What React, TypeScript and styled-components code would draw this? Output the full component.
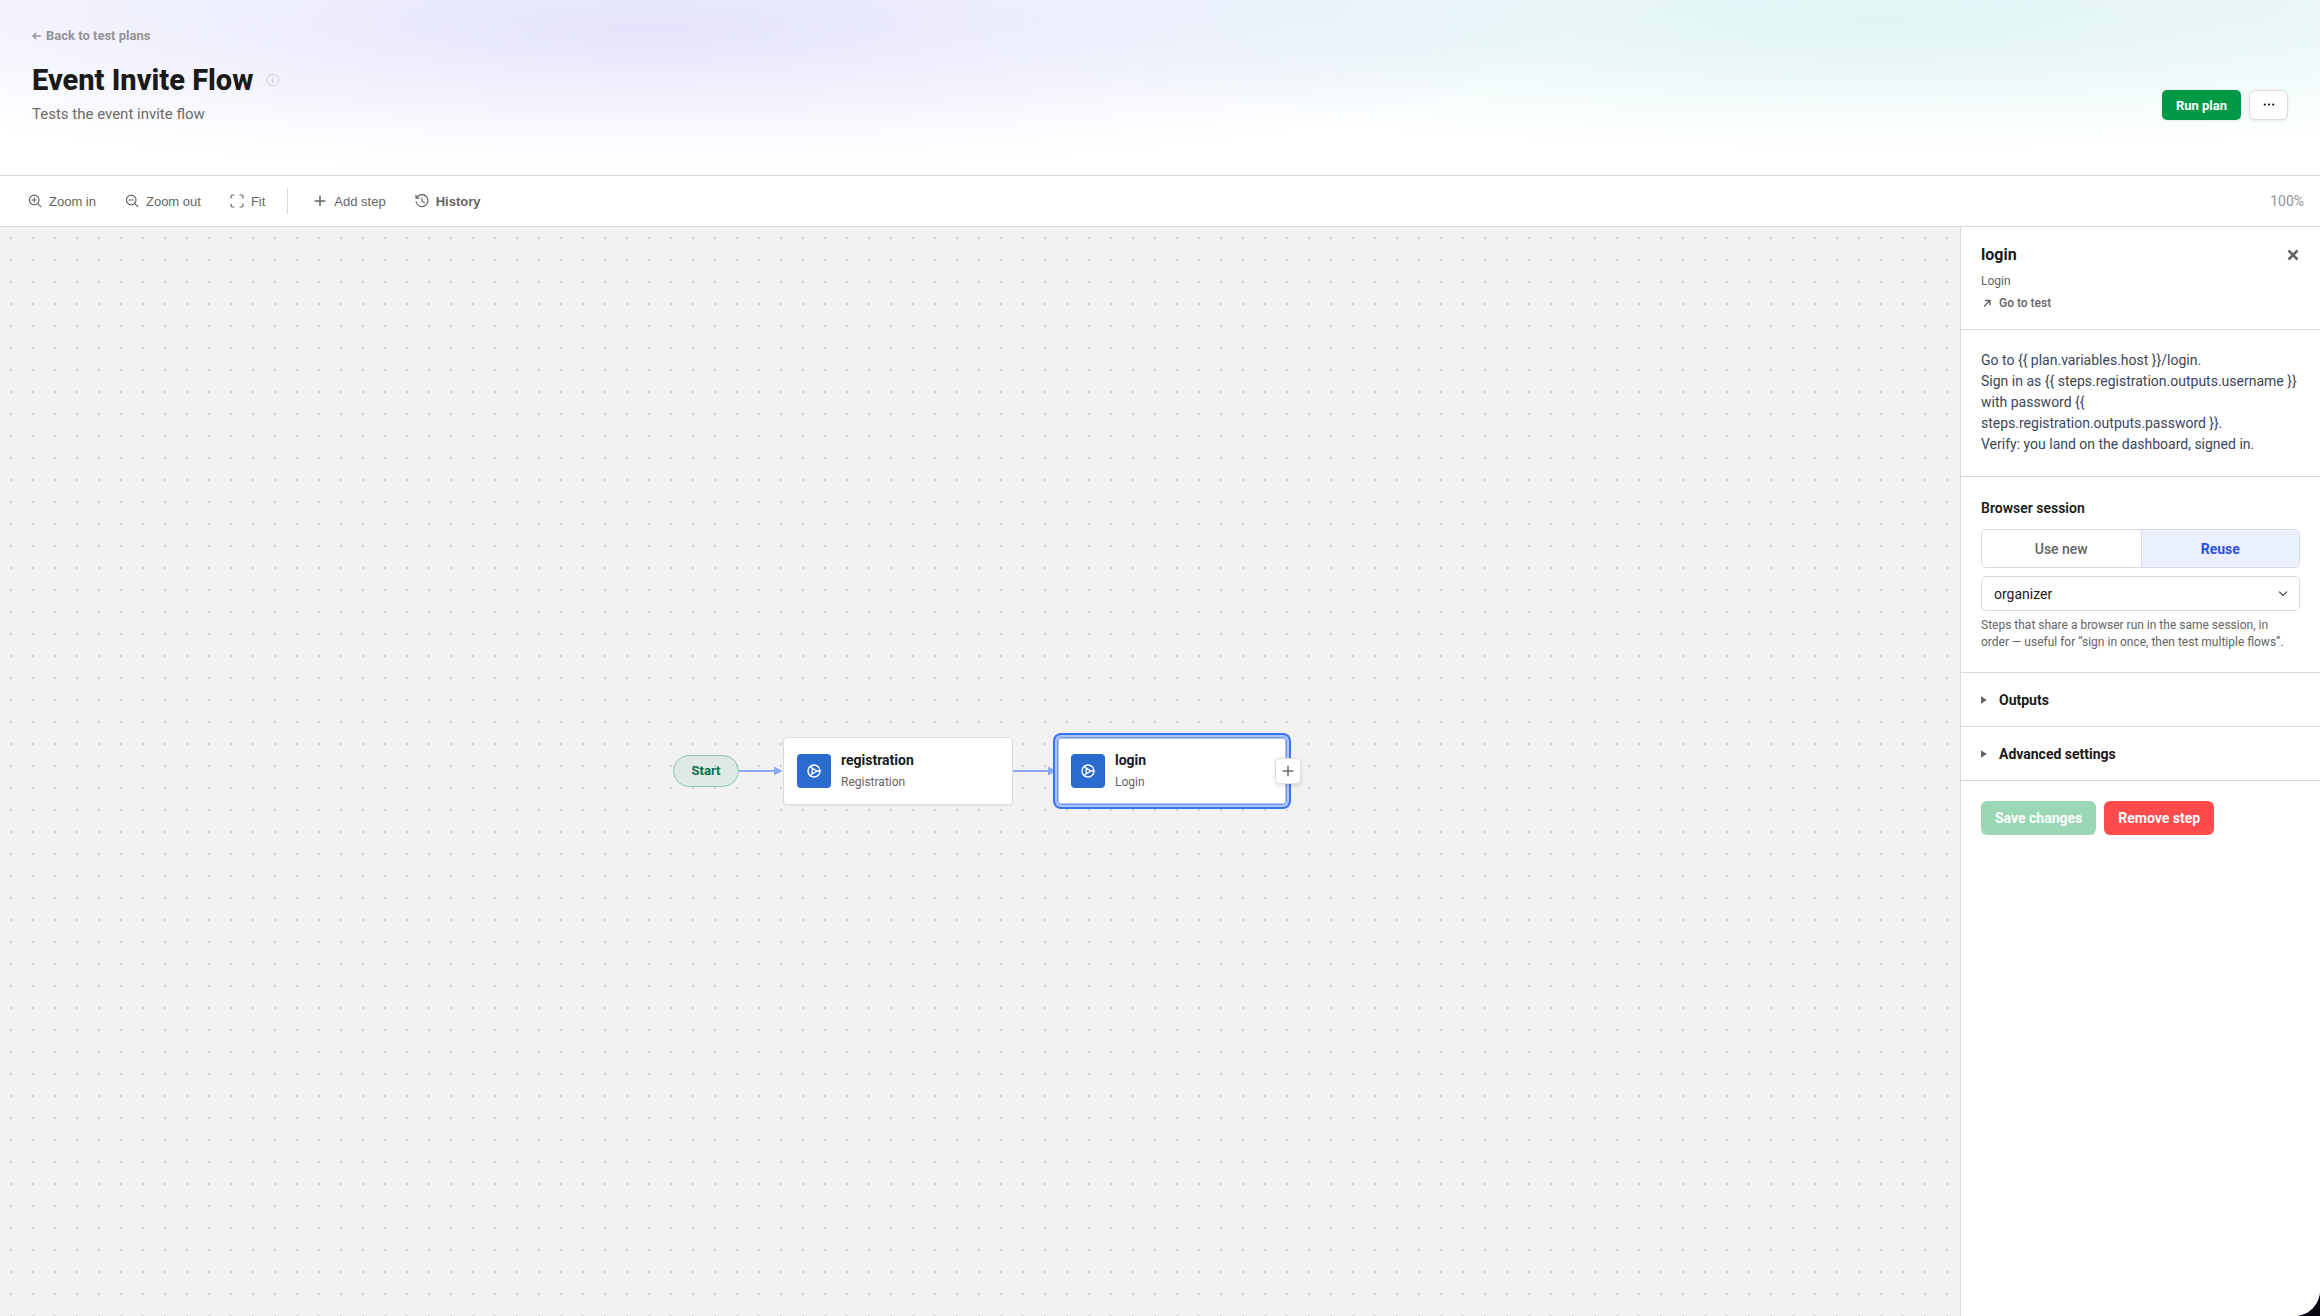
import React, { useState } from "react";
import styled, { createGlobalStyle } from "styled-components";

const GlobalStyle = createGlobalStyle`
  *, *::before, *::after { box-sizing: border-box; }
  body {
    margin: 0;
    background: #05060f;
    color: #1a1a1a;
    font-family: Roboto, "Noto Sans", "Liberation Sans", sans-serif;
    font-size: 14px;
    -webkit-font-smoothing: antialiased;
  }
  h1, h2, h3, p { margin: 0; }
  button, select { font: inherit; cursor: pointer; }
  a { color: inherit; text-decoration: none; }
`;

const Page = styled.div`
  min-height: 100vh;
  display: flex;
  flex-direction: column;
  background: #fff;
  border-bottom-right-radius: 26px;
  overflow: hidden;
`;

const Header = styled.header`
  display: flex;
  align-items: flex-end;
  justify-content: space-between;
  padding: 26px 32px 50px;
  border-bottom: 1px solid #d9dadb;
  background:
    radial-gradient(ellipse 40% 82% at 28% 17%, rgba(124, 108, 232, 0.17), rgba(124, 108, 232, 0.08) 50%, rgba(124, 108, 232, 0) 100%),
    radial-gradient(ellipse 40% 75% at 81% 13%, rgba(60, 205, 175, 0.14), rgba(60, 205, 175, 0.07) 50%, rgba(60, 205, 175, 0) 100%),
    linear-gradient(180deg, #f8faff 0, #fff 75%);
`;

const BackLink = styled.a`
  display: flex;
  align-items: center;
  gap: 5px;
  color: #949494;
  font-size: 13px;
  line-height: 19px;
  font-weight: 700;
`;

const TitleRow = styled.div`
  display: flex;
  align-items: center;
  gap: 13px;
  margin-top: 16px;
`;

const Title = styled.h1`
  font-size: 29px;
  line-height: 38px;
  font-weight: 800;
`;

const Subtitle = styled.p`
  margin-top: 4px;
  color: #6b6b6b;
  font-size: 15px;
  line-height: 22px;
`;

const HeaderActions = styled.div`
  display: flex;
  gap: 8px;
  padding-bottom: 5px;
`;

const RunButton = styled.button`
  height: 30px;
  padding: 0 14px;
  border: 0;
  border-radius: 5px;
  background: #009a47;
  color: #fff;
  font-size: 13px;
  font-weight: 700;
  box-shadow: 0 1px 2px rgba(0, 0, 0, 0.08);
`;

const MoreButton = styled.button`
  display: grid;
  place-items: center;
  width: 39px;
  height: 30px;
  padding: 0;
  border: 1px solid #dcdcdc;
  border-radius: 6px;
  background: #fff;
  color: #1a1a1a;
  box-shadow: 0 1px 2px rgba(0, 0, 0, 0.08);
`;

const Toolbar = styled.div`
  display: flex;
  align-items: center;
  gap: 5px;
  height: 51px;
  padding: 0 16px;
  border-bottom: 1px solid #d9dadb;
`;

const ToolButton = styled.button<{ $strong?: boolean }>`
  display: flex;
  align-items: center;
  gap: 7px;
  height: 28px;
  padding: 0 12px;
  border: 0;
  background: none;
  color: #646464;
  font-family: "Liberation Sans", Arial, sans-serif;
  font-size: 13px;
  font-weight: ${(p) => (p.$strong ? 700 : 400)};
`;

const Divider = styled.span`
  width: 1px;
  height: 26px;
  margin: 0 8px 0 5px;
  background: #d9dadb;
`;

const ZoomLevel = styled.span`
  margin-left: auto;
  color: #949494;
  font-size: 14px;
`;

const Workspace = styled.main`
  flex: 1;
  display: flex;
`;

const Canvas = styled.section`
  flex: 1;
  display: flex;
  align-items: center;
  justify-content: center;
  padding-bottom: 2px;
  background: radial-gradient(circle, #d2d2d2 1px, transparent 1px) 0 0 / 22px 22px #f2f2f2;
`;

const StartNode = styled.div`
  display: flex;
  justify-content: center;
  width: 66px;
  border: 1px solid #8dcab4;
  border-radius: 16px;
  background: rgba(0, 122, 80, 0.08);
  color: #04724d;
  font-size: 13px;
  line-height: 30px;
  font-weight: 700;
`;

const StepNode = styled.article<{ $selected?: boolean }>`
  position: relative;
  display: flex;
  align-items: center;
  gap: 10px;
  width: 230px;
  height: 68px;
  padding: 0 13px;
  border: 1px solid ${(p) => (p.$selected ? "#6f97fa" : "#dcdcdc")};
  border-radius: 4px;
  background: #fff;
  box-shadow: ${(p) =>
    p.$selected
      ? "inset 0 0 0 1px #b0c5fc, 0 0 0 2px #b0c5fc, 0 0 0 4px #3b72f6"
      : "0 1px 2px rgba(0, 0, 0, 0.06)"};
`;

const StepIcon = styled.span`
  display: grid;
  place-items: center;
  width: 34px;
  height: 34px;
  border-radius: 4px;
  background: #2a6bd0;
  color: #fff;
`;

const StepName = styled.h3`
  font-size: 14px;
  line-height: 22px;
  font-weight: 700;
`;

const StepType = styled.p`
  color: #646464;
  font-size: 12px;
  line-height: 22px;
`;

const AddButton = styled.button`
  position: absolute;
  right: -15px;
  top: 50%;
  transform: translateY(-50%);
  display: grid;
  place-items: center;
  width: 26px;
  height: 26px;
  padding: 0;
  border: 1px solid #dedede;
  border-radius: 4px;
  background: #fff;
  color: #6b6b6b;
  box-shadow: 0 2px 4px rgba(0, 0, 0, 0.12);
`;

const Panel = styled.aside`
  width: 360px;
  border-left: 1px solid #d9dadb;
  background: #fff;
`;

const Section = styled.section`
  padding: 20px 20px 21px;
  border-bottom: 1px solid #d9dadb;
`;

const PanelHead = styled.div`
  display: flex;
  justify-content: space-between;
  align-items: flex-start;
  padding: 17px 20px 15px;
  border-bottom: 1px solid #d9dadb;
`;

const PanelTitle = styled.h2`
  font-size: 16px;
  line-height: 22px;
  font-weight: 700;
`;

const PanelType = styled.p`
  margin-top: 4px;
  color: #646464;
  font-size: 12px;
  line-height: 22px;
`;

const TestLink = styled.a`
  display: flex;
  align-items: center;
  gap: 6px;
  color: #646464;
  font-size: 12px;
  line-height: 22px;
  font-weight: 500;
`;

const CloseButton = styled.button`
  display: grid;
  place-items: center;
  width: 14px;
  height: 22px;
  padding: 0;
  border: 0;
  background: none;
  color: #646464;
`;

const Instructions = styled.p`
  color: #3b4659;
  font-size: 14px;
  line-height: 21px;
  white-space: pre-line;
`;

const Label = styled.h3`
  font-size: 14px;
  line-height: 22px;
  font-weight: 600;
`;

const Segments = styled.div`
  display: grid;
  grid-template-columns: 1fr 1fr;
  height: 39px;
  margin-top: 10px;
  border: 1px solid #d9dadb;
  border-radius: 5px;
  overflow: hidden;
`;

const Segment = styled.button<{ $active: boolean }>`
  border: 0;
  background: ${(p) => (p.$active ? "#eaf0fe" : "#fff")};
  color: ${(p) => (p.$active ? "#2a50e6" : "#646464")};
  font-size: 14px;
  font-weight: ${(p) => (p.$active ? 700 : 500)};
  & + & { border-left: 1px solid #d9dadb; }
`;

const SelectWrap = styled.div`
  display: grid;
  align-items: center;
  margin-top: 8px;
  > * { grid-area: 1 / 1; }
  svg { justify-self: end; margin-right: 12px; pointer-events: none; color: #646464; }
`;

const Select = styled.select`
  appearance: none;
  width: 100%;
  height: 35px;
  padding: 0 12px;
  border: 1px solid #d9dadb;
  border-radius: 5px;
  background: #fff;
  color: #1a1a1a;
  font-size: 14px;
`;

const Hint = styled.p`
  margin-top: 6px;
  padding-right: 8px;
  color: #646464;
  font-size: 12px;
  line-height: 17px;
`;

const Disclosure = styled.button`
  display: flex;
  align-items: center;
  gap: 12px;
  width: 100%;
  height: 54px;
  padding: 0 20px;
  border: 0;
  border-bottom: 1px solid #d9dadb;
  background: #fff;
  color: #1a1a1a;
  font-size: 14px;
  font-weight: 700;
`;

const PanelActions = styled.div`
  display: flex;
  gap: 8px;
  padding: 20px;
`;

const ActionButton = styled.button<{ $tone: string }>`
  height: 34px;
  padding: 0 14px;
  border: 0;
  border-radius: 6px;
  background: ${(p) => p.$tone};
  color: #fff;
  font-size: 14px;
  font-weight: 700;
`;

const stroke = { fill: "none", stroke: "currentColor", strokeLinecap: "round", strokeLinejoin: "round" } as const;

const ZoomIcon = ({ plus }: { plus?: boolean }) => (
  <svg width="14" height="14" viewBox="0 0 14 14" {...stroke} strokeWidth="1.2">
    <circle cx="6.2" cy="6" r="4.8" />
    <path d={plus ? "M9.8 9.600 12.800 12.600M4.200 6h4M6.200 4v4" : "M9.8 9.600 12.800 12.600M4.200 6h4"} />
  </svg>
);

const FitIcon = () => (
  <svg width="14" height="14" viewBox="0 0 14 14" {...stroke} strokeWidth="1.2">
    <path d="M1 4V2.5A1.5 1.5 0 0 1 2.500 1H4M10 1h1.500A1.500 1.500 0 0 1 13 2.500V4M13 10v1.500a1.500 1.500 0 0 1-1.500 1.500H10M4 13H2.500A1.500 1.500 0 0 1 1 11.500V10" />
  </svg>
);

const PlusIcon = () => (
  <svg width="14" height="14" viewBox="0 0 14 14" {...stroke} strokeWidth="1.5">
    <path d="M7 2.200v9.600M2.200 7h9.600" />
  </svg>
);

const HistoryIcon = () => (
  <svg width="14" height="14" viewBox="0 0 14 14" {...stroke} strokeWidth="1.2">
    <path d="M1.500 4A6 6 0 1 1 1 7.500M1 1.200V4.200H4M7 4v3.300l2.300 1.500" />
  </svg>
);

const PlayIcon = () => (
  <svg width="14" height="14" viewBox="0 0 14 14" {...stroke} strokeWidth="1.4">
    <circle cx="7" cy="7" r="6" />
    <path d="M5.200 4.200v5.600L10 7zM5.200 4.200 3.400 2.200M5.200 9.800l-1.800 2M10 7h3" />
  </svg>
);

const Edge = () => (
  <svg width="44" height="10" viewBox="0 0 44 10">
    <path d="M0 5h36" stroke="#8aa9fb" strokeWidth="2" />
    <path d="M35 .5 43.500 5 35 9.500z" fill="#8aa9fb" />
  </svg>
);

const Triangle = () => (
  <svg width="6" height="8" viewBox="0 0 6 8">
    <path d="M0 .2v7.600L5.800 4z" fill="#646464" />
  </svg>
);

const Step = ({ name, type, selected }: { name: string; type: string; selected?: boolean }) => (
  <StepNode $selected={selected}>
    <StepIcon><PlayIcon /></StepIcon>
    <div>
      <StepName>{name}</StepName>
      <StepType>{type}</StepType>
    </div>
    {selected && <AddButton aria-label="Add next step"><PlusIcon /></AddButton>}
  </StepNode>
);

const instructions = `Go to {{ plan.variables.host }}/login.
Sign in as {{ steps.registration.outputs.username }} with password {{ steps.registration.outputs.password }}.
Verify: you land on the dashboard, signed in.`;

export default function App() {
  const [reuse, setReuse] = useState(true);
  return (
    <Page>
      <GlobalStyle />
      <Header>
        <div>
          <BackLink href="#plans">
            <svg width="9" height="8" viewBox="0 0 9 8" {...stroke} strokeWidth="1.500"><path d="M8.200 4H1M3.800 1.200 1 4l2.800 2.800" /></svg>
            Back to test plans
          </BackLink>
          <TitleRow>
            <Title>Event Invite Flow</Title>
            <svg width="14" height="14" viewBox="0 0 14 14" fill="none" stroke="#cfcfd8"><circle cx="7" cy="7" r="6" /><path d="M7 6v4M7 3.800v1.200" strokeWidth="1.400" /></svg>
          </TitleRow>
          <Subtitle>Tests the event invite flow</Subtitle>
        </div>
        <HeaderActions>
          <RunButton>Run plan</RunButton>
          <MoreButton aria-label="More actions">
            <svg width="12" height="4" viewBox="0 0 12 4" fill="currentColor"><circle cx="1.800" cy="1.600" r="1.100" /><circle cx="6" cy="1.600" r="1.100" /><circle cx="10.200" cy="1.600" r="1.100" /></svg>
          </MoreButton>
        </HeaderActions>
      </Header>
      <Toolbar>
        <ToolButton><ZoomIcon plus />Zoom in</ToolButton>
        <ToolButton><ZoomIcon />Zoom out</ToolButton>
        <ToolButton><FitIcon />Fit</ToolButton>
        <Divider />
        <ToolButton><PlusIcon />Add step</ToolButton>
        <ToolButton $strong><HistoryIcon />History</ToolButton>
        <ZoomLevel>100%</ZoomLevel>
      </Toolbar>
      <Workspace>
        <Canvas>
          <StartNode>Start</StartNode>
          <Edge />
          <Step name="registration" type="Registration" />
          <Edge />
          <Step name="login" type="Login" selected />
        </Canvas>
        <Panel>
          <PanelHead>
            <div>
              <PanelTitle>login</PanelTitle>
              <PanelType>Login</PanelType>
              <TestLink href="#test">
                <svg width="12" height="12" viewBox="0 0 12 12" {...stroke} strokeWidth="1.300"><path d="M3.500 9 9 3.500M4.500 3.500H9V8" /></svg>
                Go to test
              </TestLink>
            </div>
            <CloseButton aria-label="Close">
              <svg width="12" height="12" viewBox="0 0 12 12" {...stroke} strokeLinecap="butt" strokeWidth="2.600"><path d="m1.500 1.500 9 9M10.500 1.500l-9 9" /></svg>
            </CloseButton>
          </PanelHead>
          <Section>
            <Instructions>{instructions}</Instructions>
          </Section>
          <Section>
            <Label id="session">Browser session</Label>
            <Segments role="group" aria-labelledby="session">
              <Segment $active={!reuse} onClick={() => setReuse(false)}>Use new</Segment>
              <Segment $active={reuse} onClick={() => setReuse(true)}>Reuse</Segment>
            </Segments>
            <SelectWrap>
              <Select aria-labelledby="session"><option>organizer</option></Select>
              <svg width="10" height="6" viewBox="0 0 10 6" {...stroke} strokeWidth="1.500"><path d="m1.500 1 3.500 3.500L8.500 1" /></svg>
            </SelectWrap>
            <Hint>Steps that share a browser run in the same session, in order — useful for “sign in once, then test multiple flows”.</Hint>
          </Section>
          <Disclosure aria-expanded={false}><Triangle />Outputs</Disclosure>
          <Disclosure aria-expanded={false}><Triangle />Advanced settings</Disclosure>
          <PanelActions>
            <ActionButton $tone="#9ad7b5">Save changes</ActionButton>
            <ActionButton $tone="#ff4b4b">Remove step</ActionButton>
          </PanelActions>
        </Panel>
      </Workspace>
    </Page>
  );
}
